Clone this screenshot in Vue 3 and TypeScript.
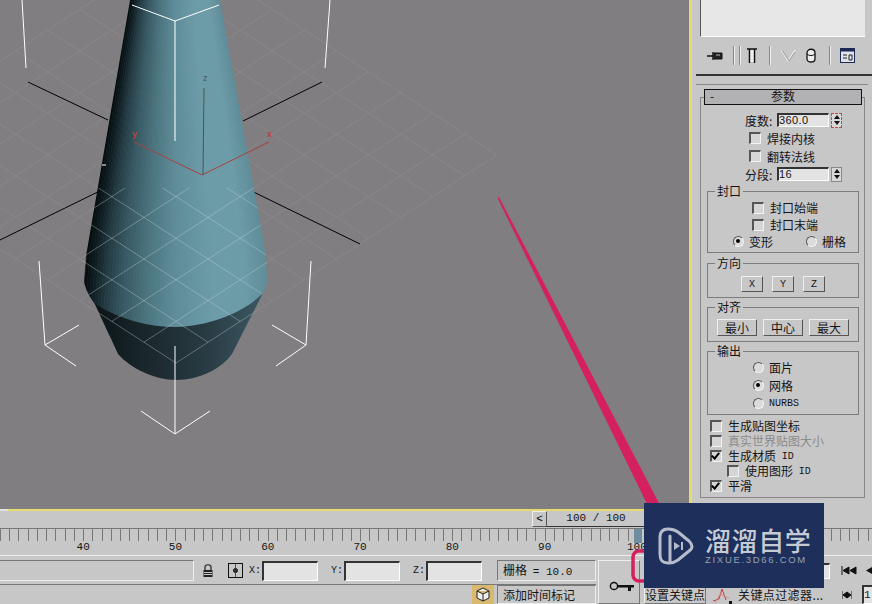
<script setup lang="ts">
// 3ds Max の画面: ビューポート + コマンドパネル + タイムライン
type Line = { x1: number; y1: number; x2: number; y2: number }

const hexToRgb = (hex: string) => [1, 3, 5].map((i) => parseInt(hex.slice(i, i + 2), 16))

// 円錐の横方向の色
const coneStops: [number, string][] = [
  [0, '#050c0e'], [0.05, '#0f1d22'], [0.12, '#233a42'], [0.22, '#385a64'],
  [0.35, '#4c7681'], [0.5, '#5f8e9a'], [0.7, '#6d9da9'], [0.88, '#6d9da9'], [1, '#5f8e9a'],
]

const coneColor = (t: number) => {
  let i = 0
  while (i < coneStops.length - 2 && t > coneStops[i + 1][0]) i++
  const [t0, c0] = coneStops[i]
  const [t1, c1] = coneStops[i + 1]
  const k = (t - t0) / (t1 - t0)
  const a = hexToRgb(c0)
  const b = hexToRgb(c1)
  return `rgb(${a.map((v, n) => Math.round(v + (b[n] - v) * k)).join(',')})`
}

const strips = Array.from({ length: 60 }, (_, i) => {
  const t0 = i / 60
  const t1 = (i + 1) / 60
  const at = (t: number, l: number, r: number) => l + (r - l) * t
  const points = [
    [at(t0, 130, 220), 0], [at(t1, 130, 220), 0],
    [at(t1, 87, 265), 250], [at(t1, 80, 270), 335],
    [at(t0, 80, 270), 335], [at(t0, 87, 265), 250],
  ].map((p) => p.join(',')).join(' ')
  return { points, color: coneColor((t0 + t1) / 2) }
})

// 床のグリッド
const gridLines: Line[] = []
const bottom = { x: 176, y: 363 }
const ux = 32.1
const uy = 20.8
for (let i = 0; i <= 10; i++) {
  gridLines.push({
    x1: bottom.x + ux * i, y1: bottom.y - uy * i,
    x2: bottom.x + ux * i - ux * 10, y2: bottom.y - uy * i - uy * 10,
  })
  gridLines.push({
    x1: bottom.x - ux * i, y1: bottom.y - uy * i,
    x2: bottom.x - ux * i + ux * 10, y2: bottom.y - uy * i - uy * 10,
  })
}

const whiteLines = [
  'M132 5 L175 21 L219 5', 'M175 21 V141', 'M22 0 L26 68', 'M330 0 L325 68',
  'M39 261 L45 345 L79 325', 'M45 345 L76 366', 'M311 261 L306 345 L272 325', 'M306 345 L276 366',
  'M175 346 V434', 'M141 411 L175 434 L210 411', 'M102 165 H106',
]
const blackLines = ['M28 82 L108 120', 'M322 82 L243 121', 'M122 180 L0 240', 'M229 180 L360 244']

const rulerLabels = [40, 50, 60, 70, 80, 90, 100]
</script>

<template>
  <div class="app">
    <div class="viewport">
      <svg width="689" height="509" viewBox="0 0 689 509">
        <defs>
          <clipPath id="cone-clip">
            <path d="M130 0 L87 250 C84 258 82 264 82 268 C83 285 88 295 95 304 L118 354 C130 368 155 380 176 380 C200 380 222 368 232 354 L263 293 C267 285 269 275 268 268 C267 260 265 253 265 250 L220 0 Z" />
          </clipPath>
          <clipPath id="front-clip">
            <rect x="0" y="188" width="689" height="321" />
          </clipPath>
          <linearGradient id="cone-lower" gradientUnits="userSpaceOnUse" x1="95" y1="0" x2="263" y2="0">
            <stop offset="0" stop-color="#0b1417" />
            <stop offset="0.3" stop-color="#1a272c" />
            <stop offset="0.65" stop-color="#283a42" />
            <stop offset="1" stop-color="#3c5863" />
          </linearGradient>
        </defs>
        <g stroke="#8e8c8e" stroke-width="1" opacity="0.7">
          <line v-for="(l, i) in gridLines" :key="i" :x1="l.x1" :y1="l.y1" :x2="l.x2" :y2="l.y2" />
        </g>
        <g fill="none" stroke="#000" stroke-width="1">
          <path v-for="d in blackLines" :key="d" :d="d" />
        </g>
        <g clip-path="url(#cone-clip)">
          <polygon v-for="(s, i) in strips" :key="i" :points="s.points" :fill="s.color" :stroke="s.color" stroke-width="0.6" />
          <path d="M88 296 L95 304 C120 320 150 327 176 327 C210 326 245 312 263 293 L275 296 L240 390 H110 Z" fill="url(#cone-lower)" />
          <g clip-path="url(#front-clip)" stroke="#c9d6da" stroke-opacity="0.38" stroke-width="1">
            <line v-for="(l, i) in gridLines" :key="i" :x1="l.x1" :y1="l.y1" :x2="l.x2" :y2="l.y2" />
          </g>
        </g>
        <g fill="none" stroke="#fff" stroke-width="1">
          <path v-for="d in whiteLines" :key="d" :d="d" />
        </g>
        <path d="M134 142 L202 175 L269 142" fill="none" stroke="#a9403f" stroke-width="1" />
        <path d="M204 88 L203 175" fill="none" stroke="#4b5558" stroke-width="1" />
        <text x="203" y="81" class="axis axis-z">z</text>
        <text x="267" y="137" class="axis axis-x">x</text>
        <text x="132" y="137" class="axis axis-x">y</text>
      </svg>
    </div>

    <aside class="panel">
      <div class="list-box"></div>
      <div class="toolbar">
        <svg class="tool-pin" width="16" height="14" viewBox="0 0 16 14">
          <path d="M0 7 H6 M6 3 V11" fill="none" stroke="#111" stroke-width="1.4" />
          <path d="M7 4 H15 V10 H7 Z" fill="#222" stroke="#111" />
          <path d="M9 6 H13" stroke="#bbb" />
        </svg>
        <span class="tool-sep sep-a"></span>
        <span class="tool-sep sep-b"></span>
        <svg class="tool-pipe" width="12" height="16" viewBox="0 0 12 16">
          <path d="M1 1 H11 M3.5 1 V15 M8.5 1 V15" fill="none" stroke="#111" stroke-width="1.5" />
          <path d="M4.5 2 H7.5 V14 H4.5 Z" fill="#eee" />
        </svg>
        <span class="tool-sep sep-c"></span>
        <svg class="tool-fork" width="16" height="14" viewBox="0 0 16 14">
          <path d="M1 1 L8 12 L15 1" fill="none" stroke="#eee" stroke-width="1.2" />
          <path d="M2 1 L9 12 L15 3" fill="none" stroke="#8a898a" stroke-width="0.7" />
        </svg>
        <svg class="tool-cyl" width="10" height="15" viewBox="0 0 10 15">
          <path d="M1 5 C1 0 9 0 9 5 V11 C9 15 1 15 1 11 Z" fill="#eee" stroke="#111" stroke-width="1.3" />
          <path d="M1 6 C3 8 7 8 9 6" fill="none" stroke="#111" />
        </svg>
        <span class="tool-sep sep-d"></span>
        <svg class="tool-conf" width="15" height="15" viewBox="0 0 15 15">
          <rect x="0.5" y="0.5" width="14" height="14" fill="#dfe3ea" stroke="#1c2a55" />
          <rect x="0.5" y="0.5" width="14" height="3" fill="#1c2a55" />
          <path d="M3 7 H7 M3 10 H7 M9 7 H12 V12 H9 Z" stroke="#222" fill="none" />
        </svg>
      </div>

      <div class="rollout">
        <div class="rollout-head"><span class="minus">-</span><span>参数</span></div>
        <div class="rollout-body">
          <div class="row spin-row">
            <span class="spin-label">度数:</span>
            <span class="input spin-input">360.0</span>
            <span class="spinner active"><i class="up"></i><i class="down"></i></span>
          </div>
          <label class="row check-row"><span class="check"></span>焊接内核</label>
          <label class="row check-row"><span class="check"></span>翻转法线</label>
          <div class="row spin-row">
            <span class="spin-label">分段:</span>
            <span class="input spin-input">16</span>
            <span class="spinner"><i class="up"></i><i class="down"></i></span>
          </div>

          <div class="group cap-group">
            <span class="legend">封口</span>
            <label class="cap-row"><span class="check"></span>封口始端</label>
            <label class="cap-row"><span class="check"></span>封口末端</label>
            <div class="cap-radios">
              <label class="radio-label"><span class="radio on"></span>变形</label>
              <label class="radio-label"><span class="radio"></span>栅格</label>
            </div>
          </div>

          <div class="group btn-group dir-group">
            <span class="legend">方向</span>
            <button class="btn mono-btn">X</button>
            <button class="btn mono-btn">Y</button>
            <button class="btn mono-btn">Z</button>
          </div>

          <div class="group btn-group align-group">
            <span class="legend">对齐</span>
            <button class="btn wide-btn">最小</button>
            <button class="btn wide-btn">中心</button>
            <button class="btn wide-btn">最大</button>
          </div>

          <div class="group out-group">
            <span class="legend">输出</span>
            <label class="out-row"><span class="radio"></span>面片</label>
            <label class="out-row"><span class="radio on"></span>网格</label>
            <label class="out-row"><span class="radio"></span><span class="mono">NURBS</span></label>
          </div>

          <div class="options">
            <label class="opt"><span class="check"></span>生成贴图坐标</label>
            <label class="opt disabled"><span class="check"></span>真实世界贴图大小</label>
            <label class="opt"><span class="check checked"></span>生成材质 <span class="mono id-tag">ID</span></label>
            <label class="opt indent"><span class="check"></span>使用图形 <span class="mono id-tag">ID</span></label>
            <label class="opt"><span class="check checked"></span>平滑</label>
          </div>
        </div>
      </div>
    </aside>

    <footer class="bottom">
      <div class="yellow-line"></div>
      <div class="slider">
        <button class="slider-prev">&lt;</button>
        <div class="slider-track">100 / 100</div>
      </div>
      <div class="ruler">
        <span class="handle"></span>
        <div class="ruler-ticks"></div>
        <div class="ruler-labels">
          <span v-for="n in rulerLabels" :key="n">{{ n }}</span>
        </div>
      </div>

      <div class="status">
        <div class="status-left">
          <div class="status-top">
            <div class="prompt"></div>
            <svg class="lock" width="10" height="13" viewBox="0 0 10 13">
              <path d="M2 6 V3 C2 0 8 0 8 3 V6" fill="none" stroke="#222" stroke-width="1.2" />
              <rect x="0.5" y="6" width="9" height="7" fill="#222" />
              <path d="M1 8.5 H9 M1 10.5 H9" stroke="#ccc" />
            </svg>
            <svg class="abs-icon" width="15" height="15" viewBox="0 0 15 15">
              <rect x="0.5" y="0.5" width="14" height="14" fill="none" stroke="#111" />
              <circle cx="7.5" cy="7.5" r="2" fill="#333" stroke="#111" />
              <path d="M7.5 1 V5 M7.5 10 V14" stroke="#555" />
            </svg>
            <div class="coord"><span class="mono">X:</span><span class="input coord-input"></span></div>
            <div class="coord"><span class="mono">Y:</span><span class="input coord-input"></span></div>
            <div class="coord"><span class="mono">Z:</span><span class="input coord-input"></span></div>
            <div class="info">栅格 <span class="mono">= 10.0</span></div>
          </div>
          <div class="status-bottom">
            <svg class="tag-icon" width="22" height="19" viewBox="0 0 22 19">
              <rect width="22" height="19" fill="#d9b96e" />
              <path d="M11 3 L17 6 V13 L11 16 L5 13 V6 Z M5 6 L11 9 L17 6 M11 9 V16" fill="#eee" stroke="#222" />
            </svg>
            <div class="info">添加时间标记</div>
          </div>
        </div>

        <button class="key-btn">
          <svg width="26" height="12" viewBox="0 0 26 12">
            <circle cx="5" cy="5" r="3.6" fill="none" stroke="#111" stroke-width="1.5" />
            <path d="M9 4 H25 V6.5 H22 V10 H19 V6.5 H9 Z" fill="#111" />
          </svg>
        </button>

        <div class="status-right">
          <div class="right-top">
            <span class="input frame-input"></span>
            <svg width="16" height="9" viewBox="0 0 16 9"><path d="M1 0 V9 M8 1 L2 4.5 L8 8 Z M15 1 L9 4.5 L15 8 Z" fill="#111" stroke="#111" /></svg>
            <svg width="12" height="9" viewBox="0 0 12 9"><path d="M10 1 L4 4.5 L10 8 Z" fill="#111" /></svg>
          </div>
          <div class="right-bottom">
            <div class="set-key">设置关键点</div>
            <svg class="filter-icon" width="21" height="18" viewBox="0 0 21 18">
              <path d="M1 15 L7 13 L10 3 L14 14" fill="none" stroke="#c43a3a" />
              <path d="M3 17 L8 8 L17 12" fill="none" stroke="#d98b8b" />
              <rect x="17" y="15" width="3" height="3" fill="#111" />
            </svg>
            <div class="filter-label">关键点过滤器...</div>
            <svg class="nav-icon" width="10" height="8" viewBox="0 0 10 8"><path d="M0 0 V8 M10 0 V8 M5 1 L1 4 L5 7 Z M5 1 L9 4 L5 7 Z" fill="#111" stroke="#111" /></svg>
            <span class="input frame-num">1</span>
          </div>
        </div>
      </div>
    </footer>

    <!-- 動画の注釈 (赤い矢印と枠) -->
    <svg class="annotation" width="872" height="604" viewBox="0 0 872 604">
      <polygon points="497.5,198 499,197 660,505 650,510" fill="#d5205f" />
      <rect x="633" y="551" width="30" height="30" rx="6" fill="none" stroke="#d5205f" stroke-width="3.5" />
    </svg>

    <div class="watermark">
      <svg width="36" height="38" viewBox="0 0 36 38">
        <path d="M10 36 C3 36 2 32 2 27 V10 C2 4 5 2 10 2 C14 2 17 3 20 5 L31 14 C35 18 35 21 31 24 L20 33 C17 35 15 36 12 36 V9" fill="none" stroke="#b6bdca" stroke-width="3" stroke-linecap="round" stroke-linejoin="round" />
        <path d="M16 15 L22 19 L16 23 Z" fill="#b6bdca" />
        <path d="M24 15 V23" stroke="#b6bdca" stroke-width="2" />
      </svg>
      <div class="wm-text">
        <div class="wm-title">溜溜自学</div>
        <div class="wm-url">ZIXUE.3D66.COM</div>
      </div>
    </div>
  </div>
</template>

<style scoped>
.app {
  position: relative;
  display: grid;
  grid-template-columns: 689px 183px;
  grid-template-rows: 509px 95px;
  width: 872px;
  height: 604px;
  overflow: hidden;
  background: #c8c7c8;
  font-family: "Noto Sans CJK SC", "Liberation Sans", sans-serif;
  font-size: 12px;
  color: #151515;
}

.viewport {
  background: #807e80;
}
.viewport svg {
  display: block;
}
.axis {
  font-family: "Liberation Sans", sans-serif;
  font-size: 9px;
}
.axis-z {
  fill: #4b5558;
}
.axis-x {
  fill: #b8403f;
  font-weight: bold;
}

.mono {
  font-family: "Liberation Mono", monospace;
  font-size: 10px;
}

/* コマンドパネル */
.panel {
  border-left: 3px solid #e6dc6c;
  height: 509px;
  box-sizing: border-box;
}
.list-box {
  width: 165px;
  height: 37px;
  margin-left: 8px;
  box-sizing: border-box;
  background: #e8e7e8;
  border-left: 1px solid #555;
  border-bottom: 1px solid #fff;
}
.toolbar {
  display: flex;
  align-items: center;
  height: 37px;
  margin-left: 4px;
  padding-left: 11px;
  border-bottom: 2px solid #333;
  box-sizing: content-box;
}
.tool-sep {
  width: 1px;
  height: 19px;
  background: #888;
  box-shadow: 1px 0 0 #eee;
}
.sep-a {
  margin-left: 10px;
}
.sep-b {
  margin-left: 5px;
}
.tool-pipe {
  margin-left: 6px;
}
.sep-c {
  margin-left: 11px;
}
.tool-fork {
  margin-left: 10px;
}
.tool-cyl {
  margin-left: 10px;
}
.sep-d {
  margin-left: 13px;
}
.tool-conf {
  margin-left: 10px;
}
.rollout {
  width: 172px;
  margin: 8px 0 0 4px;
  padding-top: 4px;
  border-top: 1px solid #8a898a;
}
.rollout-head {
  position: relative;
  z-index: 1;
  display: flex;
  justify-content: center;
  width: 158px;
  height: 16px;
  margin-left: 8px;
  box-sizing: border-box;
  border: 1px solid #111;
  background: #b2b1b3;
  line-height: 12px;
}
.minus {
  position: absolute;
  left: 5px;
}
.rollout-body {
  width: 165px;
  height: 401px;
  margin: -8px 0 0 4px;
  padding-top: 13px;
  box-sizing: border-box;
  border: 1px solid #878687;
}
.row {
  display: flex;
  align-items: center;
  height: 18px;
}
.spin-label {
  width: 30px;
  margin-left: 44px;
}
.input {
  display: block;
  box-sizing: border-box;
  background: #e4e3e4;
  border-top: 2px solid #333;
  border-left: 2px solid #333;
  border-bottom: 1px solid #fff;
  border-right: 1px solid #fff;
}
.spin-input {
  width: 52px;
  height: 14px;
  margin-left: 2px;
  font-family: "Liberation Sans", sans-serif;
  font-size: 11px;
  letter-spacing: 0.4px;
  line-height: 11px;
}
.spinner {
  display: flex;
  flex-direction: column;
  justify-content: space-around;
  align-items: center;
  width: 11px;
  height: 15px;
  margin-left: 2px;
  box-sizing: border-box;
  background: #d9d8d9;
  border: 1px solid #8a898a;
}
.spinner.active {
  border-color: #c04a4a;
  border-style: dashed;
}
.up, .down {
  width: 0;
  height: 0;
  border-left: 3px solid transparent;
  border-right: 3px solid transparent;
}
.up {
  border-bottom: 4px solid #111;
}
.down {
  border-top: 4px solid #111;
}
.check-row {
  padding-left: 48px;
}
.check {
  display: inline-block;
  flex: none;
  width: 12px;
  height: 12px;
  margin-right: 6px;
  box-sizing: border-box;
  background: #d6d5d6;
  border-top: 2px solid #555;
  border-left: 2px solid #555;
  border-bottom: 1px solid #f2f2f2;
  border-right: 1px solid #f2f2f2;
}
.check.checked {
  position: relative;
}
.check.checked::after {
  content: "";
  position: absolute;
  left: 1px;
  top: -1px;
  width: 3px;
  height: 6px;
  border-right: 2px solid #000;
  border-bottom: 2px solid #000;
  transform: rotate(40deg);
}
.group {
  position: relative;
  width: 152px;
  margin-left: 6px;
  box-sizing: border-box;
  border: 1px solid #7d7c7d;
}
.legend {
  position: absolute;
  top: -9px;
  left: 7px;
  padding: 0 2px;
  line-height: 15px;
  background: #c8c7c8;
}
.cap-group {
  height: 62px;
  margin-top: 8px;
  padding-top: 7px;
}
.cap-row {
  display: flex;
  align-items: center;
  height: 17px;
  padding-left: 44px;
}
.cap-radios {
  display: flex;
  align-items: center;
  height: 16px;
  padding-left: 25px;
  gap: 33px;
}
.radio-label {
  display: flex;
  align-items: center;
}
.radio {
  position: relative;
  flex: none;
  width: 11px;
  height: 11px;
  margin-right: 5px;
  box-sizing: border-box;
  border-radius: 50%;
  background: #dcdbdc;
  border: 1.5px solid #f2f2f2;
  border-top-color: #555;
  border-left-color: #555;
}
.radio.on::after {
  content: "";
  position: absolute;
  left: 2px;
  top: 2px;
  width: 4px;
  height: 4px;
  border-radius: 50%;
  background: #000;
}
.btn-group {
  display: flex;
  justify-content: center;
  align-items: flex-start;
  height: 35px;
}
.dir-group {
  margin-top: 10px;
  padding-top: 12px;
  gap: 9px;
}
.align-group {
  margin-top: 9px;
  padding-top: 11px;
  gap: 6px;
}
.btn {
  padding: 0;
  box-sizing: border-box;
  background: #c8c7c8;
  color: #151515;
  border: 1px solid;
  border-color: #f0f0f0 #555 #555 #f0f0f0;
  font-family: inherit;
  font-size: 12px;
}
.mono-btn {
  width: 22px;
  height: 16px;
  font-family: "Liberation Mono", monospace;
  font-size: 10px;
}
.wide-btn {
  width: 40px;
  height: 17px;
  line-height: 13px;
}
.out-group {
  height: 64px;
  margin-top: 9px;
  padding-top: 6px;
}
.out-row {
  display: flex;
  align-items: center;
  height: 18px;
  padding-left: 45px;
}
.options {
  margin: 3px 0 0 9px;
}
.opt {
  display: flex;
  align-items: center;
  height: 15px;
  line-height: 14px;
  white-space: pre;
}
.opt.disabled {
  color: #8b8a8b;
}
.opt.indent {
  padding-left: 17px;
}
.id-tag {
  margin: 2px 0 0 3px;
}

/* 下のタイムライン */
.bottom {
  grid-column: 1 / 3;
  position: relative;
}
.yellow-line {
  width: 690px;
  height: 2px;
  background: linear-gradient(to right, #e2e2e2 8px, #e6dc6c 8px);
}
.slider {
  display: flex;
  height: 17px;
  padding-left: 532px;
}
.slider-prev {
  width: 15px;
  height: 16px;
  padding: 0;
  box-sizing: border-box;
  background: #c8c7c8;
  border: 1px solid;
  border-color: #f0f0f0 #555 #555 #f0f0f0;
  font-family: "Liberation Mono", monospace;
  font-size: 11px;
}
.slider-track {
  width: 98px;
  height: 16px;
  box-sizing: border-box;
  border-bottom: 1px solid #333;
  text-align: center;
  font-family: "Liberation Mono", monospace;
  font-size: 11px;
  line-height: 15px;
}
.ruler {
  position: relative;
  height: 26px;
  border-top: 1px solid #777;
  border-bottom: 1px solid #eee;
  box-sizing: content-box;
}
.handle {
  position: absolute;
  left: 634px;
  top: 0;
  width: 8px;
  height: 14px;
  background: #6f8ea0;
}
.ruler-ticks {
  height: 12px;
  background: repeating-linear-gradient(to right, #777 0, #777 1px, transparent 1px, transparent 9.23px);
}
.ruler-labels {
  display: flex;
  padding-left: 37px;
  font-family: "Liberation Mono", monospace;
  font-size: 11px;
  line-height: 13px;
}
.ruler-labels span {
  flex: none;
  width: 92.3px;
  text-align: center;
}
.status {
  display: flex;
  margin-top: 4px;
}
.status-left {
  flex: none;
  width: 596px;
}
.status-top {
  display: flex;
  align-items: center;
  height: 21px;
}
.status-top > * {
  flex: none;
}
.prompt {
  width: 194px;
  height: 21px;
  box-sizing: border-box;
  border-top: 1px solid #777;
  border-bottom: 1px solid #eee;
  border-right: 1px solid #eee;
}
.lock {
  margin-left: 9px;
}
.abs-icon {
  margin-left: 15px;
}
.coord {
  display: flex;
  align-items: center;
  margin-left: 13px;
}
.abs-icon + .coord {
  margin-left: 6px;
}
.coord-input {
  width: 56px;
  height: 20px;
  margin-left: 1px;
}
.info {
  width: 99px;
  box-sizing: border-box;
  padding-left: 5px;
  line-height: 18px;
  border: 1px solid;
  border-color: #777 #eee #eee #777;
  white-space: pre;
}
.info .mono {
  font-size: 11px;
  margin-left: 3px;
}
.status-top .info {
  height: 21px;
  margin-left: 15px;
}
.status-bottom {
  display: flex;
  justify-content: flex-end;
  align-items: flex-start;
  gap: 3px;
  height: 23px;
  margin-top: 4px;
  box-shadow: 0 -1px 0 #777;
}
.status-bottom .info {
  height: 19px;
}
.key-btn {
  flex: none;
  width: 42px;
  height: 44px;
  margin-left: 2px;
  padding: 12px 0 0 6px;
  box-sizing: border-box;
  background: #c8c7c8;
  border: 1px solid;
  border-color: #eee #777 #777 #eee;
}
.status-right {
  flex: 1;
  padding-left: 4px;
}
.right-top {
  display: flex;
  align-items: center;
  justify-content: flex-end;
  gap: 5px;
  height: 21px;
}
.frame-input {
  width: 8px;
  height: 16px;
  margin-right: 6px;
}
.right-bottom {
  display: flex;
  align-items: center;
  height: 19px;
  margin-top: 4px;
}
.set-key {
  flex: none;
  width: 62px;
  white-space: nowrap;
  border: 1px solid;
  border-color: #eee #777 #777 #eee;
  box-sizing: border-box;
  line-height: 17px;
}
.filter-icon {
  flex: none;
  margin-left: 6px;
}
.filter-label {
  flex: none;
  width: 92px;
  margin-left: 5px;
  line-height: 16px;
  letter-spacing: 0.4px;
  white-space: nowrap;
}
.nav-icon {
  margin-left: 12px;
  flex: none;
}
.frame-num {
  width: 12px;
  height: 19px;
  margin-left: 10px;
  flex: none;
  line-height: 16px;
  overflow: hidden;
  font-family: "Liberation Mono", monospace;
  font-size: 11px;
}

/* 上に重なるもの */
.annotation {
  position: absolute;
  left: 0;
  top: 0;
  pointer-events: none;
}
.watermark {
  position: absolute;
  left: 644px;
  top: 503px;
  display: flex;
  align-items: center;
  width: 180px;
  height: 85px;
  padding: 0 0 0 14px;
  box-sizing: border-box;
  gap: 11px;
  background: #1e2f5c;
}
.wm-text {
  color: #c5cad3;
}
.wm-title {
  font-size: 26px;
  font-weight: 500;
  line-height: 29px;
  letter-spacing: 0.6px;
  white-space: nowrap;
}
.wm-url {
  font-family: "Liberation Sans", sans-serif;
  font-size: 9.5px;
  line-height: 12px;
  letter-spacing: 1.7px;
  color: #98a1b2;
  white-space: nowrap;
}
</style>
